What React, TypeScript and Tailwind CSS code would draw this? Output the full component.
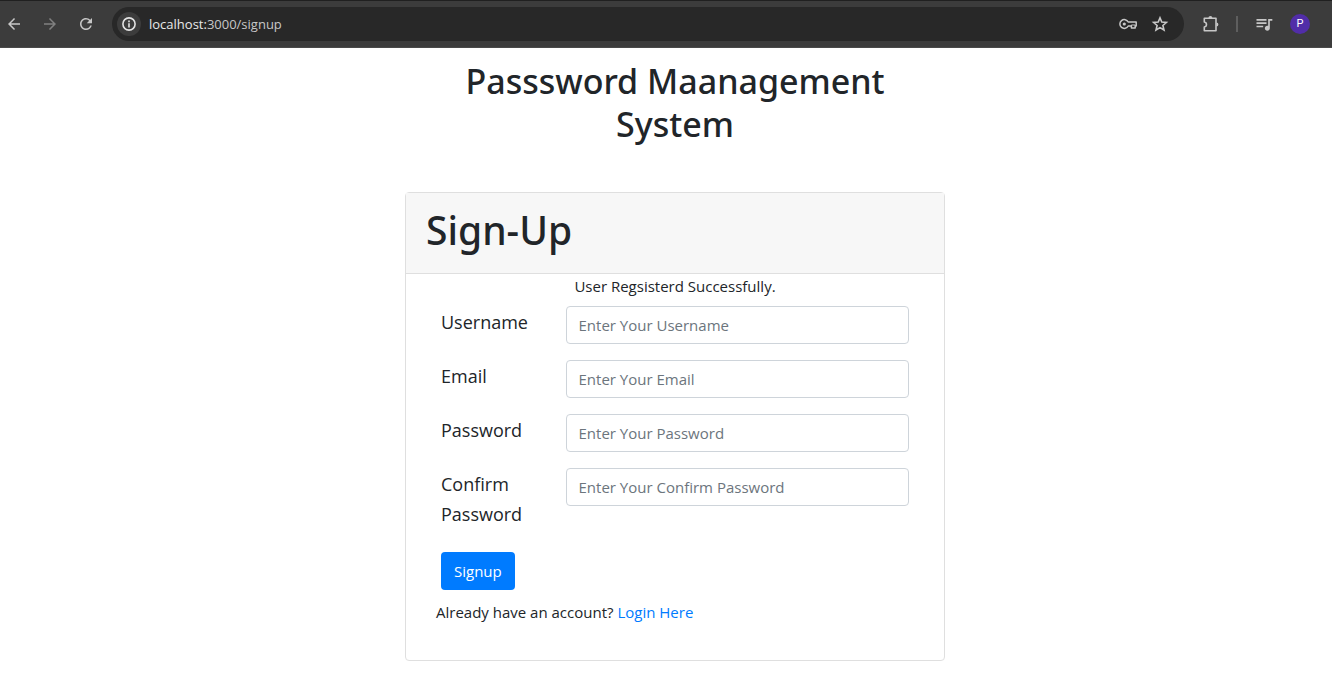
import { MdArrowBack, MdArrowForward, MdQueueMusic, MdRefresh } from "react-icons/md";

const fields = [
  { id: "username", label: "Username", type: "text", placeholder: "Enter Your Username" },
  { id: "email", label: "Email", type: "email", placeholder: "Enter Your Email" },
  { id: "password", label: "Password", type: "password", placeholder: "Enter Your Password" },
  { id: "confirm", label: "Confirm Password", type: "password", placeholder: "Enter Your Confirm Password" },
];

function InfoIcon() {
  return (
    <svg width="16" height="16" viewBox="0 0 16 16" fill="none" stroke="currentColor" strokeWidth="1.6">
      <circle cx="8" cy="8" r="6.1" />
      <path d="M8 7.3V11.4M8 4.6V6.2" />
    </svg>
  );
}

function StarIcon() {
  return (
    <svg width="20" height="20" viewBox="0 0 20 20" fill="none" stroke="currentColor" strokeWidth="1.6">
      <path d="M10 3.9L11.8 8.1L16.4 8.5L12.9 11.5L14 16L10 13.6L6 16L7.1 11.5L3.6 8.5L8.2 8.1Z" />
    </svg>
  );
}

function PuzzleIcon() {
  return (
    <svg width="18" height="18" viewBox="0 0 18 18" fill="none" stroke="currentColor" strokeWidth="1.6" strokeLinejoin="round">
      <path d="M2.3 3.3H14V15.7H2.3V12C5.2 11.4 5.2 7.6 2.3 7Z" />
      <path d="M6.4 3a2 2 0 0 1 4 0ZM14.4 7.4a2 2 0 0 1 0 4Z" fill="currentColor" stroke="none" />
    </svg>
  );
}

function KeyIcon() {
  return (
    <svg width="20" height="20" viewBox="0 0 20 20" fill="none" stroke="currentColor" strokeWidth="1.5" strokeLinejoin="round">
      <path d="M10.2 8A4.4 4.4 0 1 0 10.2 12H13.4V14H17.2V12H18.2V8Z" />
      <circle cx="6.3" cy="10" r="1.6" fill="currentColor" stroke="none" />
      <path d="M13.4 12V11H17.2V12" strokeWidth="1" />
    </svg>
  );
}

function Toolbar() {
  return (
    <header className="flex h-12 items-center border-t border-b border-t-[#202020] border-b-[#4a4a4a] bg-[#3c3c3c] pr-[22px] pl-1 text-[#c7c7c7]">
      <nav className="flex items-center gap-4" aria-label="Browser navigation">
        <button type="button" aria-label="Back" className="flex w-5 justify-center">
          <MdArrowBack size={18} />
        </button>
        <button type="button" aria-label="Forward" className="flex w-5 justify-center text-[#808080]">
          <MdArrowForward size={18} />
        </button>
        <button type="button" aria-label="Reload" className="flex w-5 justify-center">
          <MdRefresh size={18} />
        </button>
      </nav>
      <div className="ml-4 flex h-[34px] flex-1 items-center rounded-full bg-[#282828] pr-[14px] pl-[5px]">
        <button type="button" aria-label="Site information" className="flex size-6 items-center justify-center rounded-full bg-[#3c3c3c] text-[#e3e3e3]">
          <InfoIcon />
        </button>
        <span className="ml-2 flex-1 text-[13px] text-[#c7c7c7]">
          <span className="text-[#e8e8e8]">localhost:</span>3000/signup
        </span>
        <button type="button" aria-label="Saved passwords" className="mr-3">
          <KeyIcon />
        </button>
        <button type="button" aria-label="Bookmark this page">
          <StarIcon />
        </button>
      </div>
      <button type="button" aria-label="Extensions" className="ml-[18px]">
        <PuzzleIcon />
      </button>
      <span className="ml-4 h-4 w-0.5 bg-[#5e5e5e]" />
      <button type="button" aria-label="Media controls" className="ml-4">
        <MdQueueMusic size={20} />
      </button>
      <button type="button" aria-label="Profile" className="ml-4 flex size-5 items-center justify-center rounded-full bg-[#512da8] font-[Roboto,sans-serif] text-[11px] text-white">
        P
      </button>
    </header>
  );
}

export default function App() {
  return (
    <div className="min-h-screen bg-white font-['Open_Sans',sans-serif] text-[15px] leading-6 text-[#212529]">
      <Toolbar />
      <main className="pt-3 pb-3 pl-[18px]">
        <div className="mx-auto max-w-[540px]">
          <h2 className="mb-[46px] px-10 text-center font-['Noto_Sans',sans-serif] text-[34px] leading-[43px] font-medium">
            Passsword Maanagement System
          </h2>
          <section className="rounded border border-[#dfdfdf]">
            <div className="border-b border-[#dfdfdf] bg-[#f7f7f7] px-5 pt-[13px] pb-[19px]">
              <h1 className="font-['Noto_Sans',sans-serif] text-[39px] leading-[48px] font-medium">Sign-Up</h1>
            </div>
            <div className="px-5 pb-9">
              <p className="mb-2 text-center">User Regsisterd Successfully.</p>
              <form onSubmit={(event) => event.preventDefault()}>
                <div className="flex flex-col gap-4">
                  {fields.map((field) => (
                    <div key={field.id} className="flex items-start">
                      <label htmlFor={field.id} className="-mb-8 w-1/4 px-[15px] pt-px text-lg leading-[30px]">
                        {field.label}
                      </label>
                      <div className="w-3/4 px-[15px]">
                        <input
                          id={field.id}
                          type={field.type}
                          placeholder={field.placeholder}
                          className="block h-[38px] w-full rounded border border-[#ced4da] bg-white px-3 placeholder:text-[#6c757d]"
                        />
                      </div>
                    </div>
                  ))}
                </div>
                <button type="submit" className="mt-[46px] ml-[15px] block h-[38px] rounded bg-[#007bff] px-[13px] text-white">
                  Signup
                </button>
              </form>
              <p className="mt-[10px] pl-[10px]">
                Already have an account?{" "}
                <a href="/login" className="text-[#007bff]">
                  Login Here
                </a>
              </p>
            </div>
          </section>
        </div>
      </main>
    </div>
  );
}
